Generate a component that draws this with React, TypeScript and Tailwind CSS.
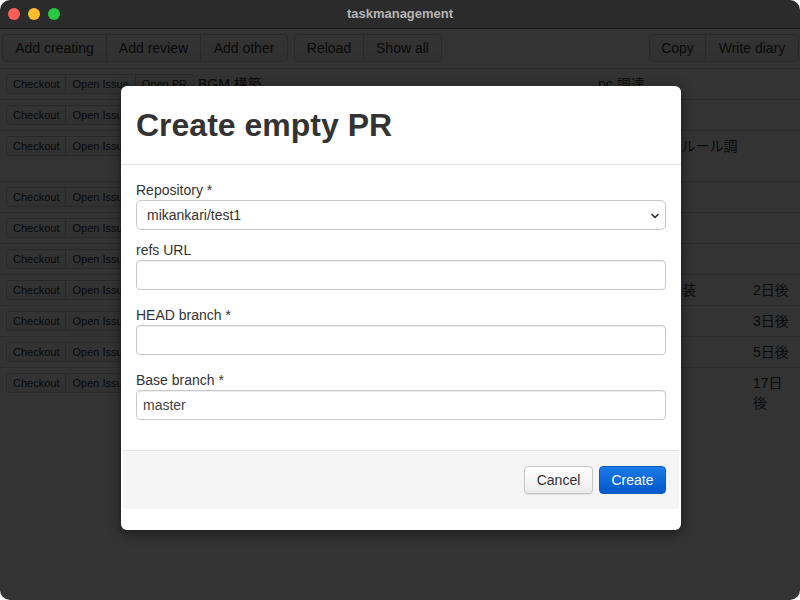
import { ChevronDown } from "lucide-react";

const rows = [
  { title: "BGM 構築", note: "pc 調達", due: "" },
  { title: "効果音の差し替え", note: "", due: "" },
  { title: "レベルデザイン見直し", note: "チーム内運用ルール調整", due: "" },
  { title: "タイトル画面の改善", note: "", due: "" },
  { title: "セーブデータ移行", note: "", due: "" },
  { title: "ステージ追加", note: "サーバー監視", due: "" },
  { title: "ランキング機能", note: "通知機能の実装", due: "2日後" },
  { title: "チュートリアル作成", note: "", due: "3日後" },
  { title: "バグ修正", note: "", due: "5日後" },
  { title: "リリース準備", note: "", due: "17日後" },
];

function ToolButton({ label, w, first }: { label: string; w: string; first?: boolean }) {
  return (
    <button
      className={`${w} h-[28px] text-center whitespace-nowrap text-[14px] leading-[20px] text-[#333] bg-gradient-to-b from-white to-[#f2f2f2] border border-[#ccc] ${
        first ? "" : "-ml-px"
      } first:rounded-l-[4px] last:rounded-r-[4px]`}
    >
      {label}
    </button>
  );
}

function SmallButton({ label, first }: { label: string; first?: boolean }) {
  return (
    <button
      className={`shrink-0 whitespace-nowrap h-[20px] px-[6px] text-[11px] leading-[18px] text-[#333] bg-gradient-to-b from-white to-[#f0f0f0] border border-[#ccc] ${
        first ? "" : "-ml-px"
      } first:rounded-l-[3px] last:rounded-r-[3px]`}
    >
      {label}
    </button>
  );
}

function Field({ label, value, mb }: { label: string; value: string; mb: string }) {
  return (
    <div className={mb}>
      <div className="text-[14px] leading-[20px] text-[#333]">{label}</div>
      <div className="h-[30px] rounded-[4px] border border-[#c9c9c9] shadow-[inset_0_1px_1px_rgba(0,0,0,0.07)] px-[6px] flex items-center text-[14px] text-[#444]">
        {value}
      </div>
    </div>
  );
}

export default function App() {
  return (
    <div className="w-[800px] h-[600px] bg-white">
      <div className="w-full h-full rounded-[10px] overflow-hidden bg-white flex flex-col font-['Liberation_Sans','Noto_Sans_CJK_JP',sans-serif]">
        {/* title bar */}
        <div className="relative h-[29px] shrink-0 bg-[#2b2b2b] border-b border-[#1b1b1b] flex items-center justify-center">
          <div className="absolute left-[8px] top-[8px] flex gap-[8px]">
            <span className="w-[12px] h-[12px] rounded-full bg-[#fe5f57]" />
            <span className="w-[12px] h-[12px] rounded-full bg-[#febc2e]" />
            <span className="w-[12px] h-[12px] rounded-full bg-[#28c840]" />
          </div>
          <span className="text-[13px] font-bold text-[#b4b4b4]">taskmanagement</span>
        </div>

        {/* page under the dialog */}
        <div className="relative flex-1">
          <div className="flex justify-between pl-[2px] pr-[1px] pt-[5px] pb-[6px]">
            <div className="flex gap-[6px]">
              <div className="flex">
                <ToolButton label="Add creating" w="w-[105px]" first />
                <ToolButton label="Add review" w="w-[95px]" />
                <ToolButton label="Add other" w="w-[88px]" />
              </div>
              <div className="flex">
                <ToolButton label="Reload" w="w-[70px]" first />
                <ToolButton label="Show all" w="w-[79px]" />
              </div>
            </div>
            <div className="flex">
              <ToolButton label="Copy" w="w-[57px]" first />
              <ToolButton label="Write diary" w="w-[94px]" />
            </div>
          </div>

          <div className="text-[14px] leading-[20px] text-[#333]">
            {rows.map((r, i) => (
              <div key={i} className="flex items-start border-t border-[#ddd] pt-[5px] pb-[5px]">
                <div className="w-[190px] shrink-0 pl-[6px] flex">
                  <SmallButton label="Checkout" first />
                  <SmallButton label="Open Issue" />
                  <SmallButton label="Open PR" />
                </div>
                <div className="w-[400px] shrink-0 pl-[8px]">{r.title}</div>
                <div className="w-[155px] shrink-0 pl-[8px]">{r.note}</div>
                <div className="flex-1 px-[8px]">{r.due}</div>
              </div>
            ))}
          </div>

          {/* backdrop + dialog */}
          <div className="absolute inset-0 bg-black/80 flex justify-center pl-[2px] pt-[57px]">
            <div className="w-[560px] h-[444px] bg-white rounded-[6px] shadow-[0_3px_12px_rgba(0,0,0,0.5)] flex flex-col">
              <div className="px-[15px] py-[15px] border-b border-[#e5e5e5]">
                <h1 className="text-[32px] leading-[48px] font-bold text-[#333]">Create empty PR</h1>
              </div>
              <div className="px-[15px] pt-[15px] pb-[15px]">
                <div className="mb-[10px]">
                  <div className="text-[14px] leading-[20px] text-[#333]">Repository *</div>
                  <div className="relative h-[30px] rounded-[5px] border border-[#c9c9c9] bg-white pl-[10px] pr-[24px] flex items-center text-[14px] text-[#333]">
                    mikankari/test1
                    <ChevronDown
                      strokeWidth={3.5}
                      className="absolute right-[4px] top-[9px] w-[12px] h-[12px] text-[#333]"
                    />
                  </div>
                </div>
                <Field label="refs URL" value="" mb="mb-[15px]" />
                <Field label="HEAD branch *" value="" mb="mb-[15px]" />
                <Field label="Base branch *" value="master" mb="mb-[15px]" />
              </div>
              <div className="mx-[2px] border-t border-[#e5e5e5] bg-[#f5f5f5] rounded-b-[4px] px-[13px] py-[15px] flex justify-end gap-[6px]">
                <button className="h-[28px] w-[69px] rounded-[4px] border border-[#c6c6c6] bg-gradient-to-b from-white to-[#ececec] shadow-[0_1px_1px_rgba(0,0,0,0.08)] text-[14px] text-[#333]">
                  Cancel
                </button>
                <button className="h-[28px] w-[67px] rounded-[4px] border border-[#0a5bc4] bg-gradient-to-b from-[#1b7ae6] to-[#0059cc] text-[14px] text-white">
                  Create
                </button>
              </div>
            </div>
          </div>
        </div>
      </div>
    </div>
  );
}
